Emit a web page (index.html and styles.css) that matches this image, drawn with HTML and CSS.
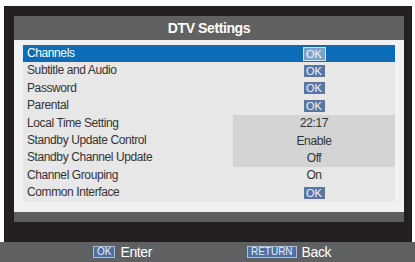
FILE: index.html
```html
<!DOCTYPE html>
<html>
<head>
  <link rel="stylesheet" href="styles.css">
</head>
<body>
  <div class="screen">
    <div class="panel">
      <div class="panel-title">DTV Settings</div>
      <div class="panel-body">
        <div class="menu">
          <div class="row selected">
            <div class="row-label">Channels</div>
            <div class="row-value"><span class="ok">OK</span></div>
          </div>
          <div class="row">
            <div class="row-label">Subtitle and Audio</div>
            <div class="row-value"><span class="ok">OK</span></div>
          </div>
          <div class="row">
            <div class="row-label">Password</div>
            <div class="row-value"><span class="ok">OK</span></div>
          </div>
          <div class="row">
            <div class="row-label">Parental</div>
            <div class="row-value"><span class="ok">OK</span></div>
          </div>
          <div class="row">
            <div class="row-label">Local Time Setting</div>
            <div class="row-value boxed">22:17</div>
          </div>
          <div class="row">
            <div class="row-label">Standby Update Control</div>
            <div class="row-value boxed">Enable</div>
          </div>
          <div class="row">
            <div class="row-label">Standby Channel Update</div>
            <div class="row-value boxed">Off</div>
          </div>
          <div class="row">
            <div class="row-label">Channel Grouping</div>
            <div class="row-value">On</div>
          </div>
          <div class="row">
            <div class="row-label">Common Interface</div>
            <div class="row-value"><span class="ok">OK</span></div>
          </div>
        </div>
      </div>
      <div class="panel-foot"></div>
    </div>
  </div>
  <div class="footer">
    <div class="hint"><span class="key">OK</span> Enter</div>
    <div class="hint hint-back"><span class="key">RETURN</span> Back</div>
  </div>
</body>
</html>
```

FILE: styles.css
```css
body {
  margin: 0;
  width: 415px;
  height: 262px;
  background: #ffffff;
  font-family: 'Liberation Sans', Arial, sans-serif;
  overflow: hidden;
}

.screen {
  margin: 6px 3px 0 4px;
  padding: 10px 8px 20px 10px;
  background: #231f20;
}

.panel {
  background: #f1f1f1;
}

.panel-title {
  height: 24px;
  line-height: 25px;
  background: #616161;
  color: #ffffff;
  text-align: center;
  font-size: 14px;
  font-weight: bold;
  letter-spacing: -0.4px;
}

.panel-body {
  padding: 5px 9px 10px 9px;
}

.menu {
  background: #e7e7e7;
  border-radius: 0 0 4px 4px;
}

.row {
  display: flex;
  height: 17.4px;
  align-items: stretch;
  color: #333333;
  font-size: 12px;
  letter-spacing: -0.4px;
}

.row-label {
  flex: 1;
  padding-left: 4px;
  line-height: 17px;
}

.row-value {
  width: 162px;
  display: flex;
  align-items: center;
  justify-content: center;
}

.row-value.boxed {
  background: #d4d4d4;
}

.row.selected {
  background: #0b6db9;
  color: #ffffff;
}

.ok {
  display: inline-block;
  width: 21px;
  height: 12px;
  line-height: 12px;
  background: #5877a3;
  color: #f4f6fa;
  text-align: center;
  font-size: 11px;
  letter-spacing: 0;
}

.row.selected .ok {
  background: #7ea1c9;
  border: 1px solid #d3e2f1;
  height: 12px;
}

.panel-foot {
  height: 10px;
  background: #5d5d5d;
}

.footer {
  height: 20px;
  background: #5f6062;
  display: flex;
  align-items: center;
  padding-left: 93px;
  color: #ffffff;
  font-size: 14px;
  letter-spacing: -0.4px;
}

.hint {
  display: flex;
  align-items: center;
  gap: 5px;
}

.hint-back {
  margin-left: 95px;
}

.key {
  display: inline-block;
  height: 10px;
  line-height: 10px;
  padding: 0 3px;
  background: #4e70a3;
  border: 1px solid #a8bedb;
  color: #e8eef6;
  font-size: 10px;
  letter-spacing: 0;
}
```
